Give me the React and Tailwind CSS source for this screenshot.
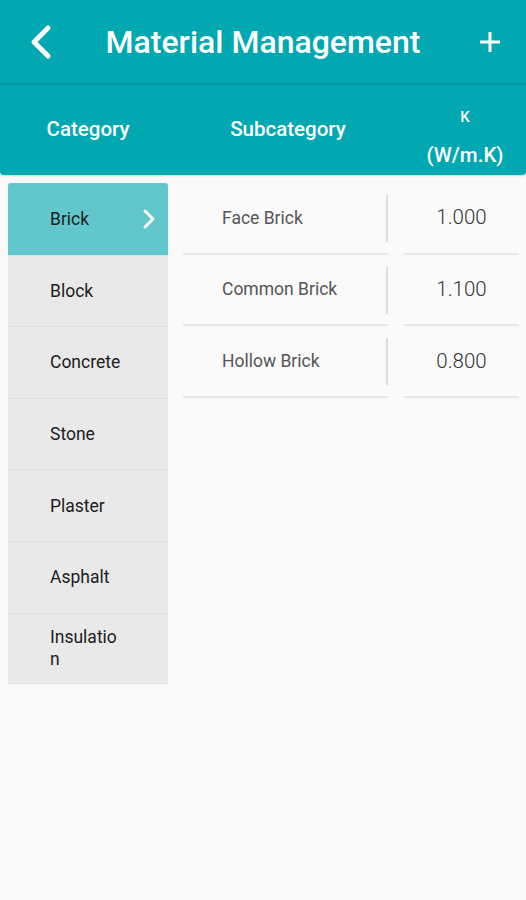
import React from "react";

const categories = ["Brick", "Block", "Concrete", "Stone", "Plaster", "Asphalt", "Insulation"];

const rows = [
  { name: "Face Brick", k: "1.000" },
  { name: "Common Brick", k: "1.100" },
  { name: "Hollow Brick", k: "0.800" },
];

const App = () => {
  return (
    <div
      className="w-[526px] h-[900px] bg-[#fafafa] overflow-hidden"
      style={{ fontFamily: "Roboto, 'Noto Sans', sans-serif" }}
    >
      {/* title bar */}
      <div className="h-[83px] bg-[#02a8b1] flex items-center justify-between pl-[28px] pr-[24px] text-white relative z-10 shadow-[0_1px_2px_rgba(0,0,0,0.18)]">
        <svg width="26" height="36" viewBox="0 0 26 36" fill="none" stroke="white" strokeWidth="5" strokeLinecap="round" strokeLinejoin="round">
          <path d="M20 4 L6 18 L20 32" />
        </svg>
        <div className="text-[32px] font-medium -ml-[6px]">Material Management</div>
        <svg width="24" height="24" viewBox="0 0 24 24" fill="none" stroke="white" strokeWidth="3">
          <path d="M12 2 V22 M2 12 H22" />
        </svg>
      </div>

      {/* column header */}
      <div className="h-[92px] bg-[#02a8b1] rounded-b-[4px] flex items-center text-white text-[20.5px] font-medium shadow-[0_1px_2px_rgba(0,0,0,0.15)]">
        <div className="w-[176px] text-center">Category</div>
        <div className="w-[224px] text-center">Subcategory</div>
        <div className="flex-1 flex flex-col items-center pl-[4px] pt-[16px]">
          <span className="text-[15px] leading-[20px] mb-[16px]">K</span>
          <span className="leading-[24px]">(W/m.K)</span>
        </div>
      </div>

      {/* body */}
      <div className="flex pt-[8px] pl-[8px]">
        <div className="w-[160px] flex flex-col">
          {categories.map((c, i) => (
            <div
              key={c}
              className={`h-[71.6px] flex items-center pl-[42px] pr-[14px] text-[17.5px] text-[#1c1c1c] ${
                i === 0
                  ? "bg-[#62c7cd] rounded-t-[3px]"
                  : "bg-[#e9e9e9] border-t border-[#e0e0e0]"
              } ${i === categories.length - 1 ? "border-b border-b-[#dcdcdc]" : ""}`}
            >
              <span className="w-[74px] break-all leading-[22px]">{c}</span>
              {i === 0 && (
                <svg className="ml-auto -mr-[2px]" width="14" height="22" viewBox="0 0 14 22" fill="none" stroke="white" strokeWidth="3" strokeLinecap="round" strokeLinejoin="round">
                  <path d="M3 3 L11 11 L3 19" />
                </svg>
              )}
            </div>
          ))}
        </div>

        <div className="flex flex-col ml-[15px]">
          {rows.map((r) => (
            <div key={r.name} className="flex h-[71.6px]">
              <div className="w-[205px] border-b-2 border-[#e6e6e6] flex items-center relative">
                <span className="pl-[39px] text-[17.5px] text-[#555]">{r.name}</span>
                <div className="absolute right-0 top-[12px] h-[47px] w-[2px] bg-[#dedede]" />
              </div>
              <div className="w-[115px] ml-[16px] border-b-2 border-[#e6e6e6] flex items-center justify-center text-[20.5px] font-light text-[#333]">
                {r.k}
              </div>
            </div>
          ))}
        </div>
      </div>
    </div>
  );
};

export default App;
